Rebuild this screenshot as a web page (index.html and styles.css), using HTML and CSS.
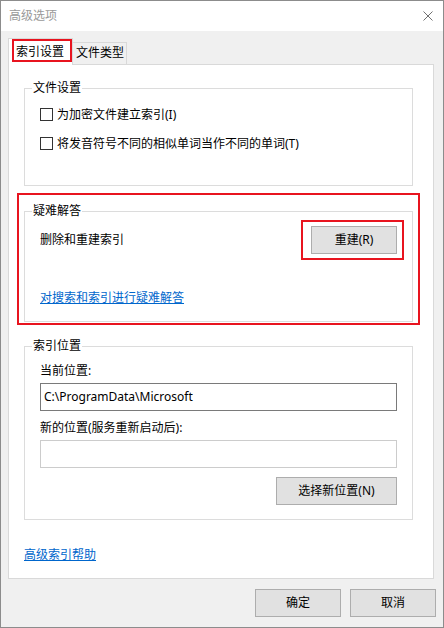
FILE: index.html
```html
<!DOCTYPE html>
<html lang="zh-CN">
<head>
  <meta charset="UTF-8" />
  <title>高级选项</title>
  <link rel="stylesheet" href="styles.css">
</head>
<body>
  <div class="window">
    <div class="titlebar">
      <span class="title">高级选项</span>
      <svg class="close" width="10" height="10" viewBox="0 0 10 10"><path d="M0.5 0.5 L9.5 9.5 M9.5 0.5 L0.5 9.5" stroke="#707070" stroke-width="1" fill="none"/></svg>
    </div>
    <div class="dialog">
      <div class="tabs">
        <div class="tab active">索引设置<span class="mark mark-tab"></span></div>
        <div class="tab">文件类型</div>
      </div>
      <div class="panel">
        <div class="group group-files">
          <span class="group-title">文件设置</span>
          <div class="check-row"><span class="checkbox"></span>为加密文件建立索引(I)</div>
          <div class="check-row"><span class="checkbox"></span>将发音符号不同的相似单词当作不同的单词(T)</div>
        </div>

        <div class="group group-trouble">
          <span class="mark mark-group"></span>
          <span class="group-title">疑难解答</span>
          <div class="rebuild-row">
            <span>删除和重建索引</span>
            <div class="btn-wrap"><button class="btn">重建(R)</button><span class="mark mark-btn"></span></div>
          </div>
          <a class="link trouble-link" href="#">对搜索和索引进行疑难解答</a>
        </div>

        <div class="group group-location">
          <span class="group-title">索引位置</span>
          <div class="label">当前位置:</div>
          <div class="field">C:\ProgramData\Microsoft</div>
          <div class="label label-new">新的位置(服务重新启动后):</div>
          <div class="field field-empty"></div>
          <div class="btn-line"><button class="btn btn-wide">选择新位置(N)</button></div>
        </div>

        <a class="link help-link" href="#">高级索引帮助</a>
      </div>
      <div class="footer">
        <button class="btn">确定</button>
        <button class="btn">取消</button>
      </div>
    </div>
  </div>
</body>
</html>
```

FILE: styles.css
```css
/* 基本样式 */
* { margin: 0; padding: 0; box-sizing: border-box; }
body { font-family: "Noto Sans", "Noto Sans CJK SC", sans-serif; font-size: 12px; line-height: 16px; color: #000; background: #f0f0f0; }
.window { width: 444px; height: 628px; border: 1px solid #8c8c8c; background: #f0f0f0; display: flex; flex-direction: column; }

/* 标题栏 */
.titlebar { height: 30px; background: #fff; display: flex; align-items: center; justify-content: space-between; padding: 0 10px 0 8px; }
.title { color: #999; }

.dialog { padding: 7px 0 0 7px; }

/* 选项卡 */
.tabs { display: flex; align-items: flex-end; height: 26px; }
.tab { height: 22px; padding: 2px 2px 0 3px; border: 1px solid #d9d9d9; border-left: none; border-bottom: none; background: #f0f0f0; }
.tab.active { position: relative; z-index: 1; width: 65px; height: 27px; margin-bottom: -1px; padding: 5px 0 0 7px; border-left: 1px solid #d9d9d9; background: #fff; }

.panel { width: 426px; height: 515px; background: #fff; border: 1px solid #d9d9d9; padding: 23px 20px 14px 15px; display: flex; flex-direction: column; }

/* 分组框 */
.group { position: relative; border: 1px solid #dcdcdc; padding: 0 15px; }
.group-title { position: absolute; top: -9px; left: 7px; padding: 0 1px; background: #fff; }
.group-files { padding-top: 11px; padding-bottom: 27px; }
.check-row { height: 29px; display: flex; align-items: center; gap: 4px; }
.checkbox { width: 13px; height: 13px; border: 1px solid #333; background: #fff; }

.group-trouble { margin-top: 25px; padding-top: 14px; padding-bottom: 15px; }
.rebuild-row { height: 28px; display: flex; align-items: center; justify-content: space-between; margin-bottom: 36px; }
.btn-wrap { position: relative; }

.group-location { margin-top: 24px; padding-top: 16px; padding-bottom: 14px; }
.field { height: 28px; margin-top: 4px; border: 1px solid #7a7a7a; padding: 5px 3px; background: #fff; }
.field-empty { border-color: #cccccc; }
.label-new { margin-top: 9px; }
.btn-line { display: flex; justify-content: flex-end; margin-top: 9px; }

/* 按钮和链接 */
.btn { width: 86px; height: 28px; font: inherit; color: #000; background: #e1e1e1; border: 1px solid #adadad; }
.btn-wide { width: 121px; }
.link { color: #0066cc; text-decoration: underline; align-self: flex-start; }
.trouble-link { display: inline-block; }
.help-link { margin-top: 27px; }

.footer { display: flex; justify-content: flex-end; gap: 9px; margin-top: 10px; padding-right: 7px; }

/* 红色标注框 */
.mark { position: absolute; border: 2px solid #e8141f; pointer-events: none; }
.mark-tab { left: 3px; top: 0; width: 60px; height: 23px; }
.mark-group { left: -8px; top: -19px; width: 403px; height: 132px; }
.mark-btn { left: -10px; top: -6px; width: 103px; height: 40px; }
```
